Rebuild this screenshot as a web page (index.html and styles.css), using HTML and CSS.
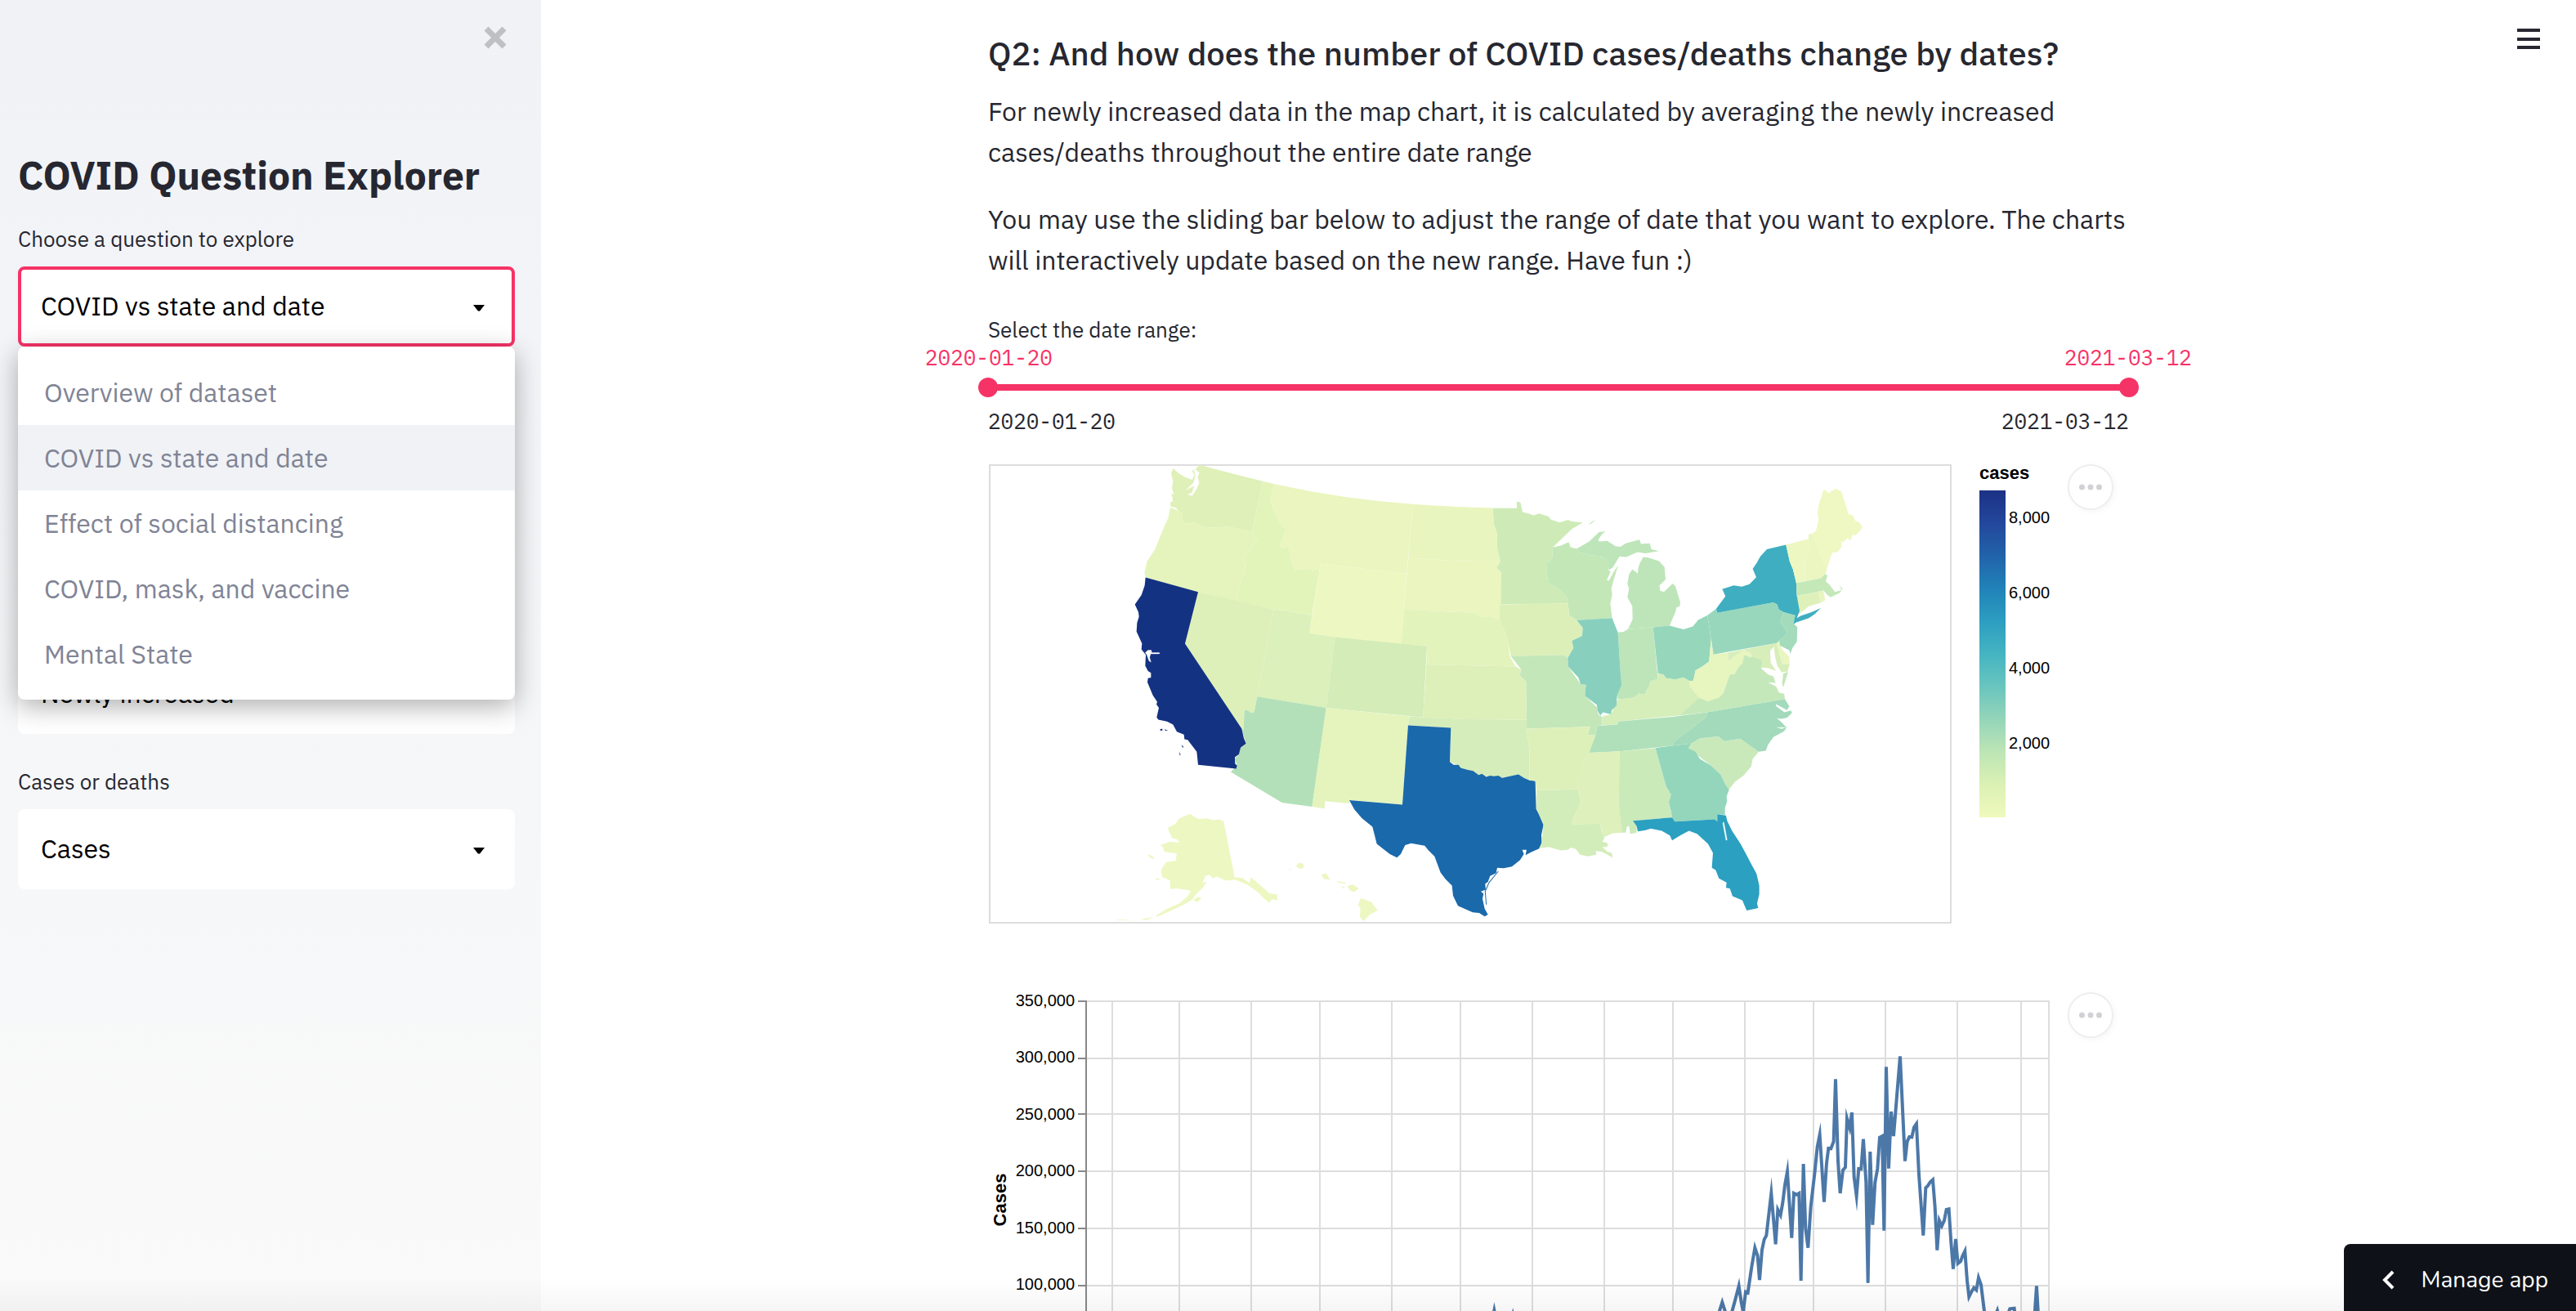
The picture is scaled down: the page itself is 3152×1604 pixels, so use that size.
FILE: index.html
```html
<!DOCTYPE html>
<html lang="en">
<head>
<meta charset="utf-8">
<title>COVID Question Explorer</title>
<link rel="stylesheet" href="styles.css">
</head>
<body>
<div class="app">
  <aside class="sidebar">
    <button class="close" type="button" aria-label="Close sidebar">
      <svg width="28" height="28" viewBox="0 0 28 28"><path d="M3 3L25 25M25 3L3 25" stroke="#bfc0c4" stroke-width="7"/></svg>
    </button>
    <h1 class="sidebar-title">COVID Question Explorer</h1>
    <div class="field">
      <label class="label" for="question">Choose a question to explore</label>
      <div class="select-wrap">
        <select class="select select-active" id="question"><option>COVID vs state and date</option></select>
        <svg class="caret" width="14" height="8" viewBox="0 0 14 8"><path d="M0 0H14L8.500 7Q7 8.500 5.500 7Z"/></svg>
        <ul class="menu" role="listbox" aria-label="Questions">
          <li class="option" role="option">Overview of dataset</li>
          <li class="option option-selected" role="option" aria-selected="true">COVID vs state and date</li>
          <li class="option" role="option">Effect of social distancing</li>
          <li class="option" role="option">COVID, mask, and vaccine</li>
          <li class="option" role="option">Mental State</li>
        </ul>
      </div>
    </div>
    <div class="field field-measure">
      <label class="label" for="measure">Data type</label>
      <div class="select-wrap">
        <select class="select" id="measure"><option>Newly increased</option></select>
        <svg class="caret" width="14" height="8" viewBox="0 0 14 8"><path d="M0 0H14L8.500 7Q7 8.500 5.500 7Z"/></svg>
      </div>
    </div>
    <div class="field">
      <label class="label" for="kind">Cases or deaths</label>
      <div class="select-wrap">
        <select class="select" id="kind"><option>Cases</option></select>
        <svg class="caret" width="14" height="8" viewBox="0 0 14 8"><path d="M0 0H14L8.500 7Q7 8.500 5.500 7Z"/></svg>
      </div>
    </div>
  </aside>

  <main class="main">
    <div class="content">
      <h3 class="heading">Q2: And how does the number of COVID cases/deaths change by dates?</h3>
      <div class="prose">
        <p>For newly increased data in the map chart, it is calculated by averaging the newly increased cases/deaths throughout the entire date range</p>
        <p>You may use the sliding bar below to adjust the range of date that you want to explore. The charts will interactively update based on the new range. Have fun :)</p>
      </div>
      <div class="slider">
        <label class="label" for="from">Select the date range:</label>
        <div class="values"><output for="from">2020-01-20</output><output for="to">2021-03-12</output></div>
        <div class="track">
          <input class="range" id="from" type="range" min="0" max="417" value="0">
          <input class="range" id="to" type="range" min="0" max="417" value="417" aria-label="End date">
        </div>
        <div class="ticks"><span>2020-01-20</span><span>2021-03-12</span></div>
      </div>

      <section class="chart">
        <svg class="plot" width="1281" height="562" viewBox="-1 0 1281 562" role="img" aria-label="Average new cases by state">
          <defs>
            <linearGradient id="ramp" x1="0" y1="1" x2="0" y2="0">
              <stop offset="0" stop-color="#eff9bd"/><stop offset=".1" stop-color="#dbf1b4"/><stop offset=".2" stop-color="#bde5b5"/><stop offset=".3" stop-color="#94d5b9"/><stop offset=".4" stop-color="#69c5be"/><stop offset=".5" stop-color="#45b4c2"/><stop offset=".6" stop-color="#2c9ec0"/><stop offset=".7" stop-color="#2182b8"/><stop offset=".8" stop-color="#2163aa"/><stop offset=".9" stop-color="#23479c"/><stop offset="1" stop-color="#1c3185"/>
            </linearGradient>
          </defs>
          <rect x="1" y="1" width="1176" height="560" fill="none" stroke="#ddd" stroke-width="2"/>
          <g transform="translate(150 -8) scale(.3333 .3635)">
            <path fill="#dff0b8" d="M227 36L246 52L272 66L296 74L304 60L296 44L312 36L322 24L430 50L555 79L516 250L430 232L362 236L330 230L305 218L280 222L262 214L260 186L240 176L218 166L216 150L226 146L220 120L230 124L222 104L226 80L219 52Z"/>
            <path fill="#e5f4bc" d="M216 168L240 176L260 186L262 214L280 222L305 218L330 230L362 236L430 232L516 250L534 276L508 312L480 342L491 358L487 394L475 410L458 483L318 452L125 403L121 388L130 350L160 308L190 240L208 204Z"/>
            <path fill="#e3f4bb" d="M555 79L596 88L584 145L596 180L628 232L642 238L630 270L618 294L626 304L650 296L660 344L674 378L710 374L740 378L760 372L763 384L736 531L596 510L458 483L475 410L487 394L491 358L480 342L508 312L534 276L516 250Z"/>
            <path fill="#eaf5bf" d="M596 88Q850 140 1106 156L1084 390L768 356L763 384L760 372L740 378L710 374L674 378L660 344L650 296L626 304L618 294L630 270L642 238L628 232L596 180L584 145Z"/>
            <path fill="#e9f5bf" d="M1106 156Q1250 166 1400 169L1404 224L1416 256L1416 300L1427 350L1260 347L1090 337Z"/>
            <path fill="#eaf5bf" d="M1090 337L1260 347L1427 350L1414 370L1431 386L1431 492L1424 545L1390 534L1356 538L1332 522L1074 511Z"/>
            <path fill="#edf7c1" d="M768 356L1084 390L1064 628L820 604L727 591Z"/>
            <path fill="#e3f3bc" d="M1074 511L1332 522L1356 538L1390 534L1424 545L1446 590L1456 620L1462 668L1484 703L1156 696L1158 635L1064 628Z"/>
            <path fill="#d3ecb8" d="M820 604L1158 635L1144 874L788 842Z"/>
            <path fill="#ddf0b9" d="M1156 696L1484 703L1505 714L1498 732L1522 754L1524 882L1300 880L1144 874Z"/>
            <path fill="#def0b9" d="M318 452L596 510L535 804L524 856L516 860L500 850L488 850L485 916L478 912L270 626Z"/>
            <path fill="#dbf0ba" d="M596 510L736 531L727 591L820 604L788 842L535 804Z"/>
            <path fill="#e4f4bc" d="M788 842L1094 871L1089 901L1068 1168L874 1152L874 1164L784 1156L782 1181L736 1175Z"/>
            <path fill="#b3e0b8" d="M535 804L788 842L736 1175L626 1161L438 1058L461 1036L453 1014L468 998L470 980L494 962L478 912L485 916L488 850L500 850L516 860L524 856Z"/>
            <path fill="#143282" d="M125 403L318 452L270 626L478 912L486 944L494 962L474 976L468 998L453 1008L454 1030L461 1036L458 1047L318 1034L313 990L280 950L268 948L266 932L240 922L226 898L204 888L172 882L166 874L174 842L165 830L168 822L152 800L132 756L134 742L145 740L145 724L134 718L124 700L126 664L110 645L112 625L92 585L94 556L101 535L99 520L86 494L110 462L122 430ZM178 914L187 912V918L180 919ZM194 914L208 918L198 919ZM257 966L264 972L262 977ZM248 990L254 1000L251 1002Z"/>
            <path fill="#d5edba" d="M1094 871L1144 874L1300 880L1524 882L1524 912L1534 980L1534 1086L1494 1068L1434 1076L1390 1074L1348 1068L1328 1054L1280 1044L1272 1034L1242 1024L1246 909L1089 901Z"/>
            <path fill="#1a69ab" d="M1089 901L1246 909L1242 1024L1256 1034L1274 1034L1282 1044L1306 1050L1328 1054L1348 1068L1360 1064L1376 1074L1390 1070L1404 1072L1420 1070L1434 1078L1462 1072L1494 1066L1514 1078L1534 1086L1556 1088L1559 1182L1571 1202L1586 1236L1578 1270L1580 1295L1570 1316L1540 1328L1520 1338L1524 1320L1508 1320L1514 1334L1500 1354L1470 1376L1440 1382L1416 1380L1412 1398L1390 1408L1382 1428L1372 1434L1374 1454L1356 1460L1366 1468L1362 1484L1370 1518L1382 1538L1370 1544L1350 1532L1326 1530L1272 1508L1254 1474L1250 1440L1226 1418L1208 1396L1186 1342L1164 1322L1150 1306L1100 1298L1078 1304L1062 1334L1048 1346L1022 1334L974 1300L966 1270L958 1242L920 1214L892 1184L873 1153L1068 1168Z"/>
            <path fill="none" stroke="#1a69ab" stroke-width="3" d="M1376 1504L1372 1460L1386 1430L1420 1392"/>
            <path fill="#edf7c2" d="M290 1199L302 1208L320 1216L350 1214L375 1220L395 1217L412 1224L452 1412L480 1414L506 1432L512 1412L560 1450L580 1466L608 1470L610 1490L590 1486L580 1498L560 1484L540 1464L500 1438L455 1420L420 1424L386 1410L372 1416L360 1404L345 1408L335 1430L350 1428L335 1448L310 1470L298 1486L270 1502L230 1520L190 1536L170 1545L162 1542L205 1518L250 1500L280 1476L292 1458L270 1454L240 1450L216 1452L215 1424L200 1416L186 1412L182 1388L200 1362L236 1356L240 1332L194 1326L190 1312L180 1304L215 1292L250 1296L240 1284L222 1280L206 1246L236 1232L246 1216L265 1208ZM130 1335L148 1340L160 1350L145 1348ZM160 1416L178 1416L170 1424ZM300 1490L316 1478L330 1482L316 1496ZM108 1556L125 1550L155 1546L130 1556ZM10 1555L30 1554L90 1558L40 1557Z"/>
            <path fill="#edf7c2" d="M678 1374Q684 1362 698 1364Q710 1370 704 1380Q690 1390 678 1374ZM651 1388L660 1381L655 1389ZM770 1404L788 1398L803 1420L780 1418ZM828 1425L860 1430L858 1434L832 1430ZM846 1442L856 1444L850 1452ZM866 1442L885 1436L908 1450L890 1462L875 1456ZM916 1482L955 1496L964 1508L978 1524L948 1538L925 1560L912 1545L914 1516L905 1505Z"/>
            <path fill="#fff" stroke="#fff" d="M302 36L308 60L302 84L274 108L304 94L296 118L280 124L296 128L312 106L322 84L316 66L322 50ZM218 166L236 168L244 178ZM124 656L134 648L146 648L148 656L176 656L176 660L144 660L140 672L145 688L138 684L130 664Z"/>
          </g>
          <g transform="translate(590 -8) scale(.3333 .3635)">
            <path fill="#ceebb7" d="M80 170L168 170L168 148L181 150L189 183L210 188L230 194L250 188L285 198L292 208L325 218L356 209L368 214L410 219L370 240L340 266L300 302L298 336L276 360L282 420L320 440L350 465L356 491L110 493L111 386L94 370L107 350L96 300L96 256L84 224Z"/>
            <path fill="#bde5b9" d="M428 226L458 206L444 220ZM388 306L434 282L470 250L493 248L480 258L466 278L472 282L500 280L530 298L548 300L568 288L618 276L624 290L656 288L662 308L690 314L640 322L612 318L600 322L570 334L545 332L520 370L506 378L504 350L488 336L396 320ZM632 334L650 336L690 348L710 368L714 410L692 430L694 448L708 452L740 424L750 432L768 486L766 500L754 504L750 520L729 565L668 571L576 577L593 545L592 500L574 470L580 440L574 425L580 392L592 376L604 384L612 390L614 370L620 354Z"/>
            <path fill="#c3e7b7" d="M300 302L330 296L358 284L366 302L388 306L396 320L488 336L504 350L508 366L504 378L512 384L506 396L498 412L506 414L524 384L540 362L524 410L515 440L518 462L511 490L518 540L388 547L360 530L356 491L350 465L320 440L282 420L276 360L298 336Z"/>
            <path fill="#ddefb8" d="M107 494L356 491L360 530L388 547L410 572L408 600L370 616L376 640L355 674L340 664L146 668L136 620L126 590L104 545Z"/>
            <path fill="#c4e7b9" d="M146 668L340 664L355 674L356 702L402 762L422 764L418 802L462 840L468 866L482 872L480 900L464 902L457 935L427 934L437 906L204 912L204 882L202 754L178 732L185 714Z"/>
            <path fill="#bee5b9" d="M539 588L560 586L576 577L668 571L686 744L658 754L654 768L636 798L616 794L600 806L580 810L540 812L534 800L550 740Z"/>
            <path fill="#96d7bb" d="M668 571L729 565L780 578L814 568L834 546L868 530L881 610L874 686L850 702L824 716L816 750L802 752L780 740L750 746L716 742L706 730L686 726Z"/>
            <path fill="#d5eeba" d="M484 870L514 864L530 830L540 812L580 810L600 806L616 794L636 798L654 768L658 754L686 744L686 726L706 730L716 742L750 746L780 740L802 752L804 770L838 808L790 860L768 867L540 888L538 898L480 900Z"/>
            <path fill="#88d0bd" d="M388 547L518 540L539 588L550 740L552 765L536 800L534 834L516 850L514 864L484 857L474 868L464 850L462 832L418 802L422 764L402 762L394 740L356 702L355 674L376 640L370 616L408 600L410 572Z"/>
            <path fill="#afe0ba" d="M464 902L538 898L540 888L740 872L866 857L864 872L818 906L745 955L742 969L545 988L434 993L440 970L457 935Z"/>
            <path fill="#def0ba" d="M204 912L437 906L427 934L457 935L434 993L416 1018L392 1070L392 1116L240 1119L236 1088L214 1086L214 980Z"/>
            <path fill="#d3edba" d="M240 1119L392 1116L404 1160L374 1215L374 1234L474 1232L480 1260L490 1280L482 1292L502 1298L500 1310L482 1310L500 1326L516 1330L520 1346L480 1326L458 1324L460 1336L430 1342L400 1336L385 1318L366 1312L355 1320L330 1322L285 1310L250 1314L258 1300L266 1236L240 1182Z"/>
            <path fill="#def0bb" d="M434 993L545 988L542 1170L554 1262L520 1264L486 1278L474 1232L374 1234L374 1215L404 1160L392 1116L390 1070L416 1018Z"/>
            <path fill="#cbeab9" d="M545 988L677 977L716 1106L734 1134L726 1160L738 1211L594 1222L608 1240V1262L584 1266L580 1240L572 1242L568 1262L554 1262L542 1170Z"/>
            <path fill="#cae9ba" d="M808 962L840 944L908 938L930 954L988 946L1056 990L1034 1014L1028 1040L1000 1070L970 1090L945 1118L916 1066L880 1036L830 1000L797 978Z"/>
            <path fill="#94d6bc" d="M677 977L742 969L808 962L797 978L824 990L840 1014L880 1036L916 1066L934 1100L947 1118L938 1140L940 1156L932 1180V1202L904 1200L904 1224L894 1217L748 1225L738 1211L734 1190L726 1160L734 1134L716 1106Z"/>
            <path fill="#2ba0c0" d="M594 1222L738 1211L748 1225L894 1217L904 1224L904 1200L936 1204L940 1222L958 1256L988 1298L1006 1328L1030 1370L1048 1400L1058 1440L1058 1470L1050 1500L1054 1516L1012 1524L1006 1512L996 1490L960 1476L950 1450L936 1448L938 1430L910 1416L898 1388L884 1380L888 1330L870 1300L830 1266L800 1256L770 1270L738 1288L730 1272L700 1256L660 1248L640 1254L612 1258L608 1240Z"/>
            <path fill="#a2dabb" d="M866 857L1152 812L1168 836L1178 860L1160 875L1130 882L1158 908L1150 920L1110 940L1090 966L1082 986L1056 990L988 946L930 954L908 938L840 944L808 962L742 969L745 955L818 906L864 872Z"/>
            <path fill="#c5e8ba" d="M1000 664L1030 668L1070 680L1066 710L1090 730L1110 736L1118 758L1090 756L1120 770L1130 790L1150 795L1152 812L866 857L768 867L838 808L870 820L925 794L950 728L966 730L1000 676ZM1164 720L1156 745L1146 774L1142 760L1146 726Z"/>
            <path fill="#e7f5bf" d="M881 610L890 662L944 656L946 684L970 666L1000 648L1026 656L1030 674L1000 664L998 690L978 710L966 730L950 728L938 760L925 794L910 808L870 820L838 808L804 770L802 752L816 750L824 716L850 702L874 686Z"/>
            <path fill="#d7eebb" d="M944 656L1122 624L1142 694L1170 694L1162 720L1140 722L1124 700L1116 670L1112 636L1098 650L1100 690L1120 718L1090 708L1064 706L1070 682L1030 668L1026 656L1000 648L970 666L946 684Z"/>
            <path fill="#e9f6c0" d="M1122 624L1132 616L1140 644L1168 670L1170 692L1142 696Z"/>
            <path fill="#99d7bc" d="M868 530L900 508L904 522L1110 487L1124 494L1130 510L1148 520L1136 552L1162 590L1132 616L1122 624L890 662Z"/>
            <path fill="#a4dbbb" d="M1148 520L1190 530L1186 560L1198 570L1196 620L1180 640L1172 660L1168 648L1134 632L1132 616L1162 590L1136 552Z"/>
            <path fill="#dff1bb" d="M1196 464L1276 450L1284 488L1240 500L1204 526Z"/>
            <path fill="#3faec0" d="M1156 293L1170 350L1182 376L1194 422L1196 464L1206 516L1196 540L1210 532L1250 520L1284 506L1262 526L1240 540L1194 554L1184 560L1190 530L1148 520L1130 510L1124 494L1110 487L904 522L900 508L934 466L922 442L964 430L994 434L1022 426L1047 402L1034 374L1050 352L1062 332L1086 308Z"/>
            <path fill="#edf7c2" d="M1156 293L1238 274L1242 300L1226 340L1226 416L1194 422L1182 376L1170 350Z"/>
            <path fill="#ebf6c1" d="M1238 274L1240 256L1252 256L1306 378L1300 392L1284 406L1226 416L1226 340L1242 300Z"/>
            <path fill="#eff8c2" d="M1252 256L1266 246L1276 210L1272 186L1276 160L1294 108L1302 110L1312 120L1338 104L1360 114L1386 190L1402 194L1410 212L1426 218L1437 236L1424 250L1410 262L1402 258L1392 280L1382 270L1366 284L1360 280L1360 300L1346 318L1326 320L1314 350L1306 378Z"/>
            <path fill="#c4e8b8" d="M1194 422L1284 406L1300 392L1308 396L1302 416L1316 428L1336 452L1360 446L1352 430L1364 442L1352 456L1320 470L1306 460L1294 447L1196 464Z"/>
            <path fill="#e9f5c0" d="M1276 450L1294 447L1300 480L1284 488Z"/>
            <path fill="#fff" stroke="#fff" d="M1120 830L1160 850L1168 838L1176 850L1150 856L1120 836ZM1124 878L1168 882L1140 888ZM1124 908L1154 908L1140 912ZM928 1226L940 1286L936 1288L924 1230Z"/>
          </g>
          <text class="legend-title" x="1212" y="18">cases</text>
          <rect x="1212" y="32" width="32" height="400" fill="url(#ramp)"/>
          <g class="tick-label">
            <text x="1248" y="72">8,000</text><text x="1248" y="164">6,000</text><text x="1248" y="256">4,000</text><text x="1248" y="348">2,000</text>
          </g>
        </svg>
        <button class="more" type="button" aria-label="Chart actions"><svg width="28" height="8" viewBox="0 0 28 8"><circle cx="3.500" cy="4" r="3.500"/><circle cx="14" cy="4" r="3.500"/><circle cx="24.500" cy="4" r="3.500"/></svg></button>
      </section>

      <section class="chart">
        <svg class="plot" width="1281" height="520" viewBox="0 0 1281 520" role="img" aria-label="Cases by date">
          <path stroke="#ddd" stroke-width="2" d="M120 11H1299M120 81H1299M120 149H1299M120 219H1299M120 289H1299M120 359H1299M120 429H1299"/>
          <path stroke="#ddd" stroke-width="2" d="M152 10V498M234 10V498M322 10V498M406 10V498M494 10V498M578 10V498M666 10V498M754 10V498M838 10V498M926 10V498M1010 10V498M1098 10V498M1186 10V498M1264 10V498M1298 10V498"/>
          <path stroke="#888" stroke-width="2" d="M120 10V498M110 11H120M110 81H120M110 149H120M110 219H120M110 289H120M110 359H120M110 429H120"/>
          <g class="tick-label tick-label-end">
            <text x="106" y="17">350,000</text><text x="106" y="86">300,000</text><text x="106" y="156">250,000</text><text x="106" y="225">200,000</text><text x="106" y="295">150,000</text><text x="106" y="364">100,000</text>
          </g>
          <text class="axis-title" transform="translate(22 254) rotate(-90)">Cases</text>
          <polyline class="series" transform="translate(851 46) scale(.3333)" points="-2190,1360 -1740,1355 -1500,1270 -1300,1280 -1000,1200 -760,1100 -705,1080 -695,1030 -685,1080 -640,1090 -627,1045 -615,1100 -300,1220 -100,1100 60,1080 120,1070 142,1000 158,1050 175,1045 190,990 203,940 212,1000 219,1035 228,962 236,965 250,870 262,800 272,830 279,918 288,808 296,770 304,755 322,600 338,787 346,660 356,680 364,635 372,570 381,520 397,764 405,600 415,605 424,600 431,921 440,492 448,730 457,800 467,650 482,520 491,430 500,385 516,632 525,490 532,435 541,436 551,410 558,181 567,480 575,600 585,515 594,505 600,325 610,360 618,303 626,540 635,610 643,510 652,511 660,401 670,560 677,929 685,447 694,716 703,560 712,510 720,395 729,390 736,737 744,136 753,509 762,300 771,390 795,97 813,482 821,410 829,393 838,394 846,358 855,345 864,530 880,755 889,580 897,572 906,558 915,550 923,650 931,809 939,700 948,720 957,700 965,660 974,658 982,780 990,878 999,768 1007,858 1017,850 1025,828 1033,812 1041,920 1048,980 1058,960 1066,947 1075,955 1083,910 1092,935 1105,1040 1120,1100 1140,1060 1152,1030 1165,1080 1185,1060 1198,1024 1214,1022 1222,1090 1280,1100 1288,1060 1296,940 1304,1080 1320,1100"/>
        </svg>
        <button class="more" type="button" aria-label="Chart actions"><svg width="28" height="8" viewBox="0 0 28 8"><circle cx="3.500" cy="4" r="3.500"/><circle cx="14" cy="4" r="3.500"/><circle cx="24.500" cy="4" r="3.500"/></svg></button>
      </section>
    </div>
  </main>

  <button class="burger" type="button" aria-label="Main menu"><svg width="28" height="28" viewBox="0 0 28 28"><path d="M0 3H28M0 14H28M0 24H28" stroke="#262730" stroke-width="4"/></svg></button>
  <div class="fade"></div>
  <button class="manage" type="button">
    <svg width="16" height="24" viewBox="0 0 16 24"><path d="M14 2L4 12L14 22" fill="none" stroke="#fff" stroke-width="4"/></svg>
    <span>Manage app</span>
  </button>
</div>
</body>
</html>
```
FILE: styles.css
```css
* { box-sizing: border-box; }

body {
  margin: 0;
  background: #fff;
  color: #262730;
  font-family: "IBM Plex Sans", Roboto, sans-serif;
  font-size: 32px;
  line-height: 50px;
}

h1, h3, p, ul { margin: 0; padding: 0; }
button { border: 0; padding: 0; background: none; font: inherit; cursor: pointer; }
svg { display: block; }

.app { display: flex; height: 100vh; }

.sidebar {
  position: relative;
  flex: 0 0 21%;
  padding: 184px 32px 32px 22px;
  background: linear-gradient(#f0f2f6, #fafafa);
}
.close { position: absolute; top: 32px; right: 42px; }
.sidebar-title {
  margin-bottom: 33px;
  font-size: 48px;
  line-height: 60px;
  font-weight: 700;
  white-space: nowrap;
}
.field { display: flex; flex-direction: column; gap: 19px; }
.field + .field { margin-top: 43px; }
.field + .field-measure { margin-top: 327px; }
.label { display: block; font-size: 26px; line-height: 30px; }

.select-wrap { position: relative; }
.select {
  display: block;
  width: 100%;
  height: 98px;
  padding: 0 60px 2px 24px;
  border: 4px solid #fff;
  border-radius: 8px;
  background: #fff;
  color: #000;
  font: inherit;
  appearance: none;
}
.select-active { border-color: #f63366; }
.caret { position: absolute; right: 37px; top: 47px; }

.menu {
  position: absolute;
  z-index: 2;
  top: 100%;
  left: 0;
  right: 0;
  padding: 16px 0;
  border-radius: 8px;
  background: #fff;
  box-shadow: 0 8px 32px rgba(0, 0, 0, .32);
  list-style: none;
}
.option { padding: 15px 32px; color: #808495; }
.option-selected { background: #f0f2f6; }

.main { flex: 1; overflow: auto; scrollbar-width: none; }
.content {
  max-width: 1396px;
  margin: 0 auto;
  padding: 40px 0 160px;
}
.heading { margin-bottom: 21px; font-size: 40px; font-weight: 500; }
.prose { display: flex; flex-direction: column; gap: 32px; margin-bottom: 45px; }

.slider { margin-bottom: 38px; }
.values, .ticks {
  display: flex;
  justify-content: space-between;
  font-family: "IBM Plex Mono", "Liberation Mono", monospace;
  font-size: 26px;
  line-height: 30px;
}
.values { margin: 4px -77px 10px; color: #f63366; }
.ticks { margin-top: 14px; }
.track {
  position: relative;
  height: 24px;
  background: linear-gradient(#f63366, #f63366) center / 100% 8px no-repeat;
}
.range {
  position: absolute;
  left: -12px;
  width: calc(100% + 24px);
  height: 24px;
  margin: 0;
  background: none;
  appearance: none;
  pointer-events: none;
}
.range::-webkit-slider-thumb {
  width: 24px;
  height: 24px;
  border-radius: 50%;
  background: #f63366;
  appearance: none;
  pointer-events: auto;
}

.chart { display: flex; align-items: flex-start; gap: 40px; }
.chart + .chart { margin-top: 84px; }
.plot {
  flex: none;
  overflow: visible;
  font-family: "Liberation Sans", sans-serif;
}
.tick-label { font-size: 20px; }
.tick-label-end { text-anchor: end; }
.legend-title, .axis-title { font-size: 22px; font-weight: 700; }
.axis-title { text-anchor: middle; }
.plot text { fill: #000; }
.series { fill: none; stroke: #4c78a8; stroke-width: 12; stroke-miterlimit: 10; }

.more {
  display: grid;
  place-items: center;
  flex: none;
  width: 56px;
  height: 56px;
  border: 2px solid #eee;
  border-radius: 50%;
  background: #fff;
  box-shadow: 2px 2px 8px rgba(0, 0, 0, .04);
  fill: #d1d2d5;
}

.burger { position: fixed; top: 34px; right: 44px; }
.fade {
  position: fixed;
  inset: auto 0 0;
  height: 40px;
  background: linear-gradient(transparent, rgba(0, 0, 0, .035));
  pointer-events: none;
}
.manage {
  position: fixed;
  right: 0;
  bottom: 0;
  display: flex;
  align-items: center;
  gap: 32px;
  height: 82px;
  padding: 6px 34px 0 46px;
  border-radius: 8px 0 0;
  background: #0e1117;
  color: #fff;
  font-family: Nunito, "Open Sans", sans-serif;
  font-size: 28px;
}
```
